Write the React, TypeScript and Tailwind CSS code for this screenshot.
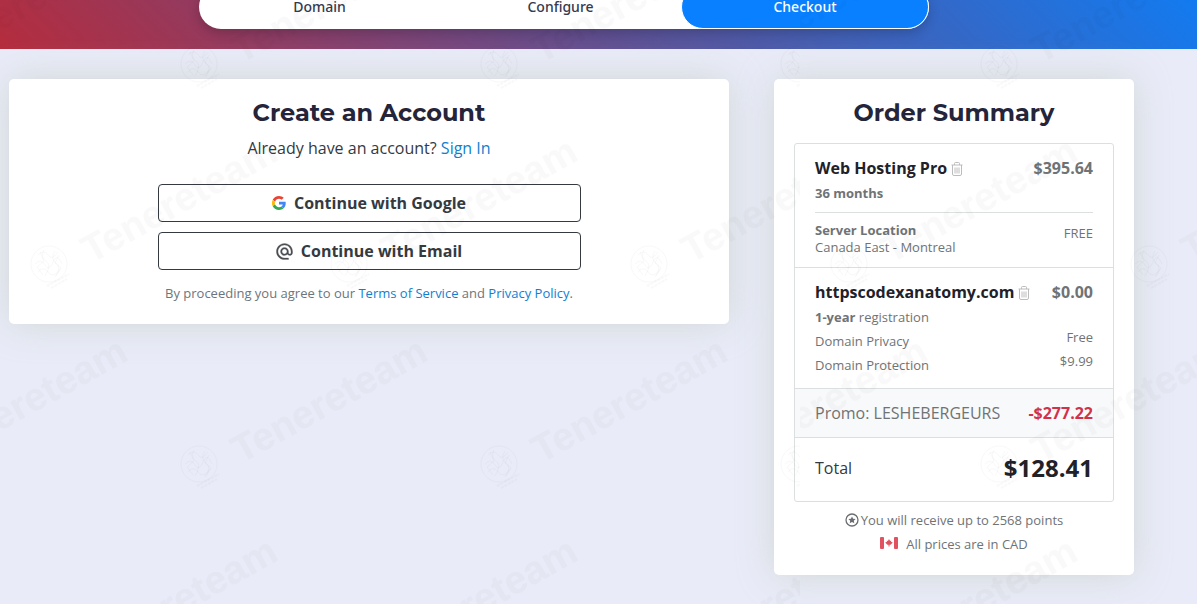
import type { ReactNode } from "react";
import { clsx } from "clsx";

const STEPS = [
  { label: "Domain", active: false },
  { label: "Configure", active: false },
  { label: "Checkout", active: true },
];

const STAMPS = [
  [-101, 64], [199, 64], [499, 64], [799, 64],
  [-251, 264], [49, 264], [349, 264], [649, 264],
  [-101, 464], [199, 464], [499, 464], [799, 464],
];

function GoogleIcon() {
  return (
    <svg viewBox="0 0 48 48" className="h-[14px] w-[14px]" aria-hidden="true">
      <path fill="#ea4335" d="M24 9.5c3.5 0 6.700 1.200 9.200 3.600l6.900-6.900C35.900 2.400 30.500 0 24 0 14.600 0 6.500 5.400 2.600 13.200l8 6.200C12.400 13.700 17.700 9.500 24 9.500z" />
      <path fill="#4285f4" d="M47 24.600c0-1.600-.2-3.100-.4-4.600H24v9h12.900c-.6 3-2.200 5.500-4.800 7.200l7.700 6C44.400 38 47 32 47 24.600z" />
      <path fill="#fbbc05" d="M10.500 28.600a14.500 14.500 0 0 1 0-9.200l-8-6.200a24 24 0 0 0 0 21.600l8-6.200z" />
      <path fill="#34a853" d="M24 48c6.500 0 11.900-2.100 15.900-5.800l-7.700-6c-2.200 1.500-4.900 2.300-8.200 2.300-6.300 0-11.600-4.200-13.500-9.900l-8 6.200C6.500 42.600 14.600 48 24 48z" />
    </svg>
  );
}

function AtIcon() {
  return (
    <svg viewBox="1.500 1.500 21 21" className="h-[17px] w-[17px] fill-[#4a4d52] stroke-[#4a4d52] stroke-[0.3]" aria-hidden="true">
      <path d="M12 2C6.480 2 2 6.480 2 12s4.480 10 10 10h5v-2h-5c-4.340 0-8-3.660-8-8s3.660-8 8-8 8 3.660 8 8v1.430c0 .79-.71 1.570-1.500 1.570s-1.500-.78-1.500-1.570V12c0-2.760-2.240-5-5-5s-5 2.240-5 5 2.240 5 5 5c1.380 0 2.640-.56 3.540-1.470.65.89 1.770 1.470 2.960 1.470 1.970 0 3.500-1.600 3.500-3.570V12c0-5.520-4.480-10-10-10zm0 13c-1.660 0-3-1.340-3-3s1.340-3 3-3 3 1.340 3 3-1.340 3-3 3z" />
    </svg>
  );
}

function TrashIcon() {
  return (
    <svg viewBox="0 0 12 14" className="h-[14px] w-3 fill-none stroke-[#bcbcbc]" aria-hidden="true">
      <path d="M.5 3h11M3.500 3V1.500a1 1 0 0 1 1-1h3a1 1 0 0 1 1 1V3M1.500 3v9a1.500 1.500 0 0 0 1.500 1.500h6a1.500 1.500 0 0 0 1.500-1.500V3M4 5.500v6M6 5.500v6M8 5.500v6" />
    </svg>
  );
}

function PointsIcon() {
  return (
    <svg viewBox="0 0 14 14" className="h-[14px] w-[14px]" aria-hidden="true">
      <circle cx="7" cy="7" r="6" fill="none" stroke="#6a6d70" strokeWidth="1.300" />
      <path fill="#6a6d70" d="M7 3.400l1.100 2.300 2.500.3-1.800 1.700.5 2.500L7 9l-2.300 1.200.5-2.500L3.400 6l2.500-.3z" />
    </svg>
  );
}

function CanadaFlag() {
  return (
    <svg viewBox="0 0 18 12" className="mb-[2px] h-3 w-[18px]" aria-hidden="true">
      <rect width="4" height="12" rx="1" fill="#e0525f" />
      <rect x="14" width="4" height="12" rx="1" fill="#e0525f" />
      <path fill="#e0525f" d="M9 2l1.100 1.900 1.100-.4-.2 1.300 1.800.8-2.200 2.200H9.500v1.700h-1V7.800H7.400L5.200 5.600 7 4.800l-.2-1.300 1.100.4z" />
    </svg>
  );
}

function Watermark() {
  return (
    <svg className="pointer-events-none absolute inset-0 h-full w-full" aria-hidden="true">
      <defs>
        <pattern id="stamps" width="800" height="400" patternUnits="userSpaceOnUse">
          {STAMPS.map(([x, y]) => (
            <g key={`${x}-${y}`} transform={`translate(${x} ${y})`}>
              <g fill="none" stroke="#000" strokeOpacity="0.025">
                <circle r="18" />
                <path d="M-11-9q6-6 10 0t10-3M-14 0q6-6 10 1t8-3 9 2M-11 8q5-7 10 0t12-3M-5-14q-4 7 2 11t-1 15M6-13q-5 8 1 12t-1 14M-9-12l4 9-7 6 6 8M10-9l-4 8 6 5-5 8" />
                <path d="M-2 22l22-12M2 24l16-9" strokeDasharray="3 1" strokeWidth="2" />
              </g>
              <text
                transform="translate(42 0) rotate(-29)"
                className="font-['Liberation_Sans',sans-serif] text-[39px] font-bold"
                fillOpacity="0.024"
              >
                Tenereteam
              </text>
            </g>
          ))}
        </pattern>
      </defs>
      <rect width="100%" height="100%" fill="url(#stamps)" />
    </svg>
  );
}

function Card({ title, className, children }: { title: string; className?: string; children: ReactNode }) {
  return (
    <section className={clsx("rounded-[5px] bg-white px-5 pt-5 shadow-[0_0_36px_rgba(200,205,200,0.7)]", className)}>
      <h2 className="text-center font-['Montserrat','DejaVu_Sans',sans-serif] text-2xl leading-7 font-bold text-[#24243a]">
        {title}
      </h2>
      {children}
    </section>
  );
}

function ItemTitle({ name, price }: { name: string; price: string }) {
  return (
    <div className="flex items-center text-base leading-6 font-bold">
      <h3 className="text-[#212129]">{name}</h3>
      <button type="button" aria-label={`Remove ${name}`} className="ml-1 cursor-pointer pt-[2px]">
        <TrashIcon />
      </button>
      <span className="ml-auto">{price}</span>
    </div>
  );
}

function LoginButton({ icon, children }: { icon: ReactNode; children: ReactNode }) {
  return (
    <button
      type="button"
      className="flex h-[38px] w-full cursor-pointer items-center justify-center gap-2 rounded border border-[#343a40] font-bold text-[#343a40]"
    >
      {icon}
      {children}
    </button>
  );
}

export default function App() {
  return (
    <div className="relative min-h-screen overflow-hidden bg-[#e9ecf8] font-['Open_Sans',sans-serif] text-[#343a40]">
      <header className="flex h-[49px] items-end overflow-hidden bg-[linear-gradient(45deg,#b52c3d,#5f5093_50%,#127bf0)] pb-5">
        <nav className="ml-[199px] flex h-11 w-full max-w-[730px] shrink-0 rounded-full bg-white font-['Noto_Sans',sans-serif] text-sm leading-[14px] font-medium shadow-[0_4px_12px_rgba(0,0,0,0.2)]">
          {STEPS.map((step) => (
            <a
              key={step.label}
              href="#"
              aria-current={step.active ? "step" : undefined}
              className={clsx(
                "flex items-center justify-center rounded-full",
                step.active ? "w-[248px] border border-white bg-[#0880ff] text-white" : "flex-1 text-[#343a50]",
              )}
            >
              {step.label}
            </a>
          ))}
        </nav>
      </header>

      <main className="mt-[30px] ml-[9px] flex max-w-[1125px] items-start gap-[45px]">
        <Card title="Create an Account" className="flex-1 pb-[21px] text-center">
          <p className="mt-[9px] leading-6">
            Already have an account?{" "}
            <a href="#" className="text-[#0f7fd0]">Sign In</a>
          </p>
          <div className="mx-auto mt-6 flex max-w-[423px] flex-col gap-[10px]">
            <LoginButton icon={<GoogleIcon />}>Continue with Google</LoginButton>
            <LoginButton icon={<AtIcon />}>Continue with Email</LoginButton>
          </div>
          <p className="mt-[13px] text-[13px] leading-5 text-[#6c757d]">
            By proceeding you agree to our <a href="#" className="text-[#0f7fd0]">Terms of Service</a> and{" "}
            <a href="#" className="text-[#0f7fd0]">Privacy Policy</a>.
          </p>
        </Card>

        <Card title="Order Summary" className="w-[360px] shrink-0 pb-[19px]">
          <div className="mt-4 divide-y divide-[#dcdfe0] rounded-[3px] border border-[#dcdfe0] text-[13px] text-[#6f7375]">
            <div className="px-5 pt-3 pb-[11px]">
              <ItemTitle name="Web Hosting Pro" price="$395.64" />
              <p className="border-b border-[#dcdfe0] pt-px pb-[7px] leading-6 font-bold">36 months</p>
              <div className="mt-[9px] flex justify-between leading-[17px]">
                <div>
                  <p className="font-bold">Server Location</p>
                  <p>Canada East - Montreal</p>
                </div>
                <span className="pt-[3px]">FREE</span>
              </div>
            </div>
            <div className="px-5 pt-3 pb-[11px]">
              <ItemTitle name="httpscodexanatomy.com" price="$0.00" />
              <div className="mt-px flex items-end justify-between leading-6">
                <div>
                  <p><b className="font-bold">1-year</b> registration</p>
                  <p>Domain Privacy</p>
                  <p>Domain Protection</p>
                </div>
                <div className="pb-1 text-right">
                  <p>Free</p>
                  <p>$9.99</p>
                </div>
              </div>
            </div>
            <div className="flex justify-between bg-[#f8f9fa] px-5 py-3 text-base leading-6">
              <span>Promo: LESHEBERGEURS</span>
              <span className="font-bold text-[#d03349]">-$277.22</span>
            </div>
            <div className="flex h-[63px] items-center justify-between px-5 pb-1 text-base text-[#343a40]">
              <span>Total</span>
              <strong className="text-2xl font-bold text-[#212129]">$128.41</strong>
            </div>
          </div>
          <div className="mt-[6px] text-[13px] leading-6 text-[#6f7375]">
            <p className="flex items-center justify-center gap-[2px]">
              <PointsIcon />
              You will receive up to 2568 points
            </p>
            <p className="flex items-center justify-center gap-2">
              <CanadaFlag />
              All prices are in CAD
            </p>
          </div>
        </Card>
      </main>
      <Watermark />
    </div>
  );
}
